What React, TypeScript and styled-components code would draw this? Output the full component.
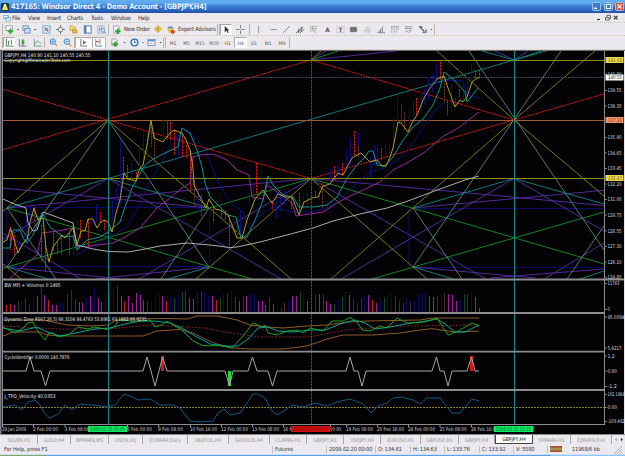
import React from "react";
import styled, { createGlobalStyle, css } from "styled-components";

const GlobalStyle = createGlobalStyle`
  * { box-sizing: border-box; }
  body { margin: 0; background: #ebe9ed; overflow: hidden; }
`;

const Window = styled.div`
  width: 625px;
  height: 456px;
  display: flex;
  flex-direction: column;
  background: #ebe9ed;
  font-family: "DejaVu Sans Condensed", "DejaVu Sans", sans-serif;
  font-size: 5.6px;
  color: #333;
  white-space: nowrap;
  overflow: hidden;
`;

const TitleBar = styled.header`
  height: 13px;
  flex: none;
  display: flex;
  align-items: center;
  padding: 0 1px 0 1px;
  background: linear-gradient(#62aef2 0, #5fa9ee 3px, #3a80d4 6px, #2c66bd 10px, #244fa0 13px);
`;

const Title = styled.h1`
  margin: 0 auto 0 2px;
  font: bold 7.4px "DejaVu Sans Condensed", "DejaVu Sans", sans-serif;
  letter-spacing: -0.27px;
  color: #e8f2ff;
`;

const CaptionButton = styled.span<{ $close?: boolean }>`
  width: 9px;
  height: 9px;
  margin-left: 2.5px;
  display: flex;
  border: 1px solid #9cc4ee;
  border-radius: 1.5px;
  background: ${(p) => (p.$close ? "#d9553a" : "#3f7ccc")};
`;

const MenuBar = styled.nav`
  height: 10px;
  flex: none;
  display: flex;
  align-items: center;
  padding: 0 5px 0 2px;
  border-bottom: 1px dotted #c9c5bb;
`;

const MenuItem = styled.span<{ $w: number }>`
  width: ${(p) => p.$w}px;
  font-size: 5.9px;
  letter-spacing: -0.2px;
`;

const MdiControls = styled.span`
  display: flex;
  gap: 2px;
  margin-left: auto;
`;

const ToolBar = styled.div<{ $h: number }>`
  height: ${(p) => p.$h}px;
  flex: none;
  display: flex;
  align-items: center;
  padding-left: 2px;
  border-bottom: 1px dotted #c9c5bb;
`;

const Slot = styled.span<{ $w: number; $on?: boolean }>`
  width: ${(p) => p.$w}px;
  height: 11px;
  flex: none;
  display: flex;
  align-items: center;
  justify-content: center;
  font-size: 4.9px;
  color: #555;
  ${(p) =>
    p.$on &&
    css`
      background: #f9f8fa;
      border: 1px solid;
      border-color: #aaa8a8 #fff #fff #aaa8a8;
    `}
`;

const ButtonText = styled.span<{ $w: number }>`
  width: ${(p) => p.$w}px;
  flex: none;
  font-size: 5.8px;
  letter-spacing: -0.2px;
`;

const Divider = styled.i<{ $grip?: boolean }>`
  width: ${(p) => (p.$grip ? 3 : 1)}px;
  height: 11px;
  flex: none;
  border-left: 1px solid #b9b5a9;
  ${(p) => p.$grip && "border-right: 1px solid #b9b5a9;"}
`;

const Workspace = styled.main`
  height: 384px;
  flex: none;
  padding: 0 1px 0 0;
  border-top: 1px solid #6f6d74;
  svg { display: block; }
`;

const Tabs = styled.div`
  height: 11px;
  flex: none;
  display: flex;
  padding-left: 1px;
  border-top: 1px solid #8b898c;
`;

const Tab = styled.span<{ $w: number; $active?: boolean }>`
  width: ${(p) => p.$w}px;
  height: 9px;
  flex: none;
  display: flex;
  align-items: center;
  justify-content: center;
  font-size: 5.2px;
  letter-spacing: -0.1px;
  color: #99979b;
  border-right: 1px solid #aaa7aa;
  ${(p) =>
    p.$active &&
    css`
      background: #fff;
      color: #222;
      border: 1px solid #444;
      border-top: 0;
    `}
`;

const StatusBar = styled.footer`
  height: 9px;
  flex: none;
  display: flex;
  align-items: center;
  padding-left: 1px;
`;

const StatusCell = styled.span<{ $w: number; $line?: boolean }>`
  width: ${(p) => p.$w}px;
  height: 7px;
  line-height: 7px;
  flex: none;
  font-size: 5.6px;
  letter-spacing: -0.1px;
  padding-left: 2px;
  margin-left: 0;
  border-left: 1px solid ${(p) => (p.$line ? "#c4c1c1" : "transparent")};
`;

const TaskbarEdge = styled.div`
  height: 3px;
  flex: none;
  border-top: 1px solid #cfe0f3;
  background: linear-gradient(90deg, #7ba56c 0, #7ba56c 45px, #5b9ff0 46px, #5b9ff0 550px, #8fc4f6 551px);
`;

/* ---------- toolbar icons, drawn on a 10x10 grid ---------- */

const glyphs: Record<string, React.ReactNode> = {
  newChart: (<><rect x="1" y="1" width="7" height="5" fill="#fff" stroke="#779" strokeWidth=".7" /><path d="M6 4v6M3 7h6" stroke="#2fae35" strokeWidth="2.2" /></>),
  profiles: (<><rect x="1" y="1" width="6" height="5" fill="#dceaf7" stroke="#6889b4" /><rect x="3" y="4" width="6" height="5" fill="#cde2f5" stroke="#6889b4" /></>),
  market: (<><rect x="1" y="1" width="8" height="8" fill="#e5f0fa" stroke="#6c9bd0" /><path d="M3 3l2 2M7 7L5 5" stroke="#d33" strokeWidth="1.4" /><path d="M7 3L3 7" stroke="#3a3" /></>),
  target: (<><circle cx="5" cy="5" r="2.6" fill="none" stroke="#888" strokeWidth="1.1" /><path d="M5 0v3M5 7v3M0 5h3M7 5h3" stroke="#777" strokeWidth="1.1" /></>),
  folder: (<><path d="M1 1h3l1 1h2v4H1z" fill="#f4d565" stroke="#b8952e" strokeWidth=".6" /><path d="M4 5h3l2 1v3H4z" fill="#f1bd38" stroke="#a47b18" strokeWidth=".6" /></>),
  terminal: (<><rect x="1.5" y="1" width="7.5" height="8" fill="#fff" stroke="#4b72a8" strokeWidth="1.1" /><path d="M3 1v8" stroke="#4b72a8" strokeWidth="1.5" /></>),
  tester: (<><rect x="1" y="1" width="7" height="8" fill="#e7eef6" stroke="#8ba0bb" strokeWidth=".8" /><path d="M3 7V3M5 6V2" stroke="#789" /><circle cx="6.5" cy="6" r="2" fill="#d5e8fa" stroke="#58a" strokeWidth=".8" /><path d="M8 7.5l1.6 2" stroke="#58a" /></>),
  order: (<><path d="M2 1h5l1 2v6H2z" fill="#fff" stroke="#777" strokeWidth=".7" /><path d="M6.5 4v6M3.5 7h6" stroke="#2fa83a" strokeWidth="2.2" /></>),
  editor: (<><path d="M5 .5L9.5 5 5 9.5.5 5z" fill="#f4ce42" stroke="#ba9426" strokeWidth=".8" /><path d="M5 3v4" stroke="#775d13" strokeWidth="1.1" /></>),
  expert: (<><path d="M1 4q4-5 8 0z" fill="#4f8bd0" /><circle cx="5" cy="6" r="2.8" fill="#edbd3a" /><circle cx="7.5" cy="7.5" r="2.2" fill="#d83a24" /></>),
  cursor: <path d="M3 1v7l2-1.6L6.2 9l1.2-.6-1.2-2.5h2z" fill="#333" />,
  cross: <path d="M5 0v4M5 6v4M0 5h4M6 5h4" stroke="#777" strokeWidth="1" />,
  vline: <path d="M5 1v8" stroke="#a29f95" strokeWidth="1.2" />,
  hline: <path d="M1.5 5h7" stroke="#99978e" strokeWidth="1.2" />,
  trend: <path d="M1.5 8.5l7-7" stroke="#777" strokeWidth="1" />,
  channel: <path d="M0 9l5-5M2 9l6-7M4 9l5-4M3 4v4M6 2v5" stroke="#666" strokeWidth="1" fill="none" />,
  fibo: <path d="M1 1.5h8M1 4h8M1 6.5h5M7 4v5M4 2v4" stroke="#918e88" strokeWidth=".9" strokeDasharray="1.3 .5" />,
  letterA: <text x="5" y="7.6" fontSize="7" fontWeight="bold" textAnchor="middle" fill="#555">A</text>,
  letterT: (<><rect x="1" y="1.5" width="8" height="7" fill="none" stroke="#999" strokeWidth=".8" strokeDasharray="1 1" /><text x="5" y="7.5" fontSize="6.5" fontWeight="bold" textAnchor="middle" fill="#555">T</text></>),
  box: <rect x="1.5" y="2.5" width="7" height="5" rx=".7" fill="#73736e" stroke="#555" strokeWidth=".6" />,
  pitch: <path d="M1 7l5-5M3 8l5-5M5 9l4-4" stroke="#888" strokeWidth=".9" strokeDasharray="1.5 .4" />,
  angle: <path d="M1 8.5h8M1 8.5L7.5 1.5M4 8.5L4 5M6 8V4" stroke="#777" strokeWidth=".9" fill="none" />,
  cycles: <path d="M2 1v8M4.5 1v8M7 1v8M9 1v5M1 2h8" stroke="#888" strokeWidth=".8" strokeDasharray="1.4 .5" />,
  levels: <path d="M1 2h8M1 4h8M2 8q1-3 2 0M6 9V6h3" stroke="#888" strokeWidth=".9" fill="none" />,
  arrows: <path d="M1 2h3v3M2 2l5 5M5 8h4V5" stroke="#555" strokeWidth="1.2" fill="none" />,
  bars: <path d="M1.5 1v8h8M4 3v5M4 4H3M7 2v5M7 6h1" stroke="#4b7a57" strokeWidth="1" fill="none" />,
  candles: (<><path d="M1.5 1v8h8M5.5 1v8" stroke="#667" strokeWidth=".9" fill="none" /><rect x="4" y="2.5" width="3" height="4.5" fill="#39a649" /></>),
  line: <path d="M1.5 1v8h8M2 7l3-4 2 2 2 1" stroke="#57916a" strokeWidth=".9" fill="none" />,
  zoomIn: (<><circle cx="4.2" cy="4" r="3" fill="#cfe5fa" stroke="#3d86d2" strokeWidth="1.1" /><path d="M6.5 6.5L9 9" stroke="#d2a03a" strokeWidth="1.6" /><path d="M2.7 4h3M4.2 2.5v3" stroke="#3478bd" strokeWidth=".8" /></>),
  zoomOut: (<><circle cx="4.2" cy="4" r="3" fill="#cfe5fa" stroke="#3d86d2" strokeWidth="1.1" /><path d="M6.5 6.5L9 9" stroke="#d2a03a" strokeWidth="1.6" /><path d="M2.7 4h3" stroke="#3478bd" strokeWidth=".8" /></>),
  scroll: (<><path d="M2 1v8h7" stroke="#667" strokeWidth=".9" fill="none" /><path d="M4.5 2.5v5L8 5z" fill="#39924a" /></>),
  shift: (<><path d="M2 1v8h7M6.5 1v6" stroke="#667" strokeWidth=".9" fill="none" /><path d="M2.5 4h3" stroke="#b44b30" strokeWidth="1.2" /></>),
  indicators: (<><path d="M2 1h4l2 2v5H2z" fill="#eef4f0" stroke="#5b7a62" strokeWidth=".7" /><path d="M6 4v6M3 7h6" stroke="#2fa83a" strokeWidth="2.1" /></>),
  clock: (<><circle cx="5" cy="5" r="3.8" fill="#e3f0fd" stroke="#2c6fc0" strokeWidth="1.5" /><path d="M5 2.8V5h2" stroke="#235" strokeWidth=".8" fill="none" /></>),
  template: (<><rect x="1" y="1.5" width="8" height="7" fill="#e9f2fb" stroke="#6487b4" strokeWidth=".9" /><path d="M1 3h8" stroke="#6494cc" strokeWidth="1.5" /><path d="M3 6h4" stroke="#cb9646" strokeWidth="1" strokeDasharray="1 .5" /></>),
  drop: <path d="M3 4h4L5 6.4z" fill="#333" />,
};

const Icon = ({ name, size = 9 }: { name: string; size?: number }) => (
  <svg width={size} height={size} viewBox="0 0 10 10">{glyphs[name]}</svg>
);

type Item = [string, number, boolean?];

const standardLeft: Item[] = [["newChart", 12], ["drop", 6], ["profiles", 11], ["drop", 6], ["market", 16], ["target", 12], ["folder", 15], ["terminal", 13], ["tester", 14]];
const drawing: Item[] = [["cursor", 12, true], ["cross", 17]];
const drawingTools: Item[] = [["vline", 17], ["hline", 12], ["trend", 15], ["channel", 12], ["fibo", 15], ["letterA", 12], ["letterT", 14], ["box", 13], ["pitch", 14], ["angle", 14], ["cycles", 13], ["levels", 14], ["arrows", 14], ["drop", 5]];
const periods: [string, number][] = [["M1", 14], ["M5", 13], ["M15", 14], ["M30", 14], ["H1", 13], ["H4", 13], ["D1", 14], ["W1", 14], ["MN", 14]];

const Slots = ({ items }: { items: Item[] }) => (
  <>{items.map(([n, w, on], i) => <Slot key={i} $w={w} $on={on}><Icon name={n} /></Slot>)}</>
);

/* ---------- chart data, in window coordinates ---------- */

const YEL = "#85850f", RED = "#d91818", CYAN = "#0d8686", TEAL = "#4d8f79", GRN = "#159326", PUR = "#5b2fa6", NAVY = "#0b0b78";

const rays: [string, number[][]][] = [
  [NAVY, [[7, 207.5, 209, 207.5], [2, 266.5, 209, 266.5], [413, 208.5, 604, 208.5], [413, 267.5, 604, 267.5], [209.5, 207, 209.5, 267], [409, 208, 409, 267], [7, 208, 7, 267]]],
  [PUR, [[2, 188, 209, 208], [7, 208, 311, 178.5], [311, 178.5, 604, 205.5], [413, 208, 604, 190.3], [108, 178.5, 2, 240], [108, 178.5, 281, 279], [2, 232.7, 81, 279], [311, 178.5, 139, 279], [311, 178.5, 486, 279], [514, 178.5, 341, 279], [514, 178.5, 604, 231], [604, 243, 544, 279], [7, 267, 120, 279], [209, 267, 95, 279], [413, 267, 535, 278], [604, 269, 490, 278], [311, 60, 326, 51], [311, 60, 395, 51], [514, 60, 495, 51], [514, 60, 528, 51]]],
  [GRN, [[7, 208, 252, 279], [2, 268.5, 311, 178.5], [311, 178.5, 604, 264], [372, 279, 604, 212], [311, 60, 338, 51]]],
  [CYAN, [[7, 208, 108, 178.5], [108, 178.5, 209, 208], [108, 178.5, 514, 60], [413, 208, 514, 178.5], [514, 178.5, 604, 204], [7, 267, 48, 279], [209, 267, 168, 279], [413, 267, 453, 279], [604, 271, 580, 279], [514, 60, 482, 51], [514, 60, 541, 51], [514, 60, 546, 51]]],
  [TEAL, [[108, 120, 7, 267], [108, 120, 209, 267], [7, 208, 56, 279], [209, 208, 161, 279], [469, 51, 604, 250], [561, 51, 413, 267], [413, 208, 462, 279], [604, 226, 567, 279]]],
  [YEL, [[108, 120, 2, 212], [108, 120, 291, 279], [311, 178.5, 196, 279], [311, 178.5, 427, 279], [514, 120, 331, 279], [514, 120, 437, 51], [595, 51, 514, 120], [514, 120, 604, 196], [2, 263, 21, 279], [311, 60, 321, 51]]],
];
const redRays = [[2, 150, 311, 60], [2, 89, 108, 120], [108, 120, 311, 178.5], [311, 60, 514, 120], [311, 178.5, 604, 94]];

const priceLines: [string, string][] = [
  ["#10107c", "77,255 85,250 108,238 125,228 140,205 150,180 160,165 167,152 182,130 192,135 205,150 217,180 230,203 243,212 250,230 260,215 272,207 290,212 311,212 330,207 345,195 360,180 370,172 385,168 400,158 415,140 425,125 435,110 444,102"],
  ["#10107c", "443,80 463,81 467,95 479,98"],
  ["#9c2a9f", "10,278 25,265 37,255 42,233 58,231 73,228 77,247 90,246 113,243 123,238 140,228 157,208 170,198 182,188 190,183 192,165 193,157 200,155 213,154 227,160 237,170 249,175 252,197 263,199 267,185 283,196 292,203 296,216 323,212 337,203 350,196 363,190 380,182 393,170 405,164 425,152 442,137 458,128 479,112"],
  ["#b4b4b4", "3,199 12,203 26,208 28,223 33,231 37,230 43,212 73,223 77,245 93,249 108,251.5 128,252 145,249 160,246 187,243 210,245 230,247.5 237,247 260,242 283,236 313,228 333,221 360,214 387,208 405,202 440,189 465,180 479,176"],
  ["#0e9a9a", "3,248 10,248 13,230 20,230 23,238 27,243 33,235 42,213 50,227 63,237 73,236 77,250 87,240 100,237 108,232 120,222 125,207 132,188 143,168 147,163 157,157 167,152 178,147 182,128 190,133 197,150 202,167 205,183 210,197 220,207 228,215 236,217 241,238 247,237 255,220 263,200 268,176 273,185 283,195 293,197 299,207 313,207 327,205 337,197 347,178 357,165 364,158 369,151 373,151 377,165 385,166 393,157 403,140 413,127 423,119 433,105 440,88 444,72 452,78 465,92 467,102 478,88"],
  ["#b5a41c", "3,242 7,240 10.5,228 15,243 18,253 23,243 27,240 30,222 34,208 38,220 43,218 46,248 49,262 53,247 62,235 65,238 73,228 77,245 81,231 85,231 88,219 93,219 97,228 101,222 104,220 108,222 112,232 116,213 120,200 124,173 128,179 136,181 139,170 143,165 147,145 151,120 154,138 163,142 170,133 174,130 182,133 186,140 190,150 193,168 194,185 200,197 206,208 209,199 215,209 220,210 228,215 237,238 242,238 247,220 255,199 263,190 272,203 278,194 285,197 292,197 299,215 304,202 312,198 318,197 323,186 330,184 338,173 343,175 347,167 352,158 361,153 370,162 377,160 382,166 386,166 390,157 393,148 398,122 401,123 408,132 412,123 417,115 423,100 430,88 437,79 444,76 448,88 455,107 460,100 463,102 467,97 472,82 477,78 479,78"],
];

const bars: [string, number[][]][] = [
  ["#0c0c7e", [[18, 242, 252], [26, 215, 245], [30, 204, 225], [73, 232, 255], [77, 220, 250], [92, 215, 225], [96.7, 204, 222], [112, 200, 220], [116, 188, 205], [120, 140, 205], [131, 160, 180], [139, 145, 170], [143.5, 134, 165], [147, 130, 160], [163, 120, 140], [178, 135, 157], [198, 190, 212], [233, 218, 235], [237, 215, 238], [240.5, 211, 238], [249, 193, 205], [253, 185, 210], [261, 170, 195], [265, 182, 200], [276, 190, 218], [280, 195, 210], [284, 190, 205], [303, 195, 210], [307, 192, 208], [319, 185, 200], [330, 168, 185], [338, 165, 178], [346, 150, 172], [350, 138, 165], [358, 132, 152], [370, 157, 178], [374, 145, 165], [377.5, 144, 165], [385.5, 145, 165], [389.5, 144, 160], [393.5, 118, 150], [397, 96, 122], [409, 110, 132], [413, 100, 118], [421, 92, 112], [424, 88, 105], [428, 77, 100], [432, 74, 92], [436.7, 65, 85], [451, 84, 112], [463, 85, 100], [467, 78, 95], [471.5, 63, 85]]],
  ["#d01616", [[10.5, 227, 250], [14.5, 235, 255], [41, 225, 262], [45.5, 245, 272], [53, 233, 252], [57.5, 242, 255], [61, 235, 255], [69, 232, 255], [80.5, 220, 238], [88.5, 219, 248], [100.5, 212, 222], [104.5, 220, 230], [123.5, 157, 180], [127.5, 165, 180], [136, 172, 182], [167, 120, 140], [170.5, 122, 140], [174.5, 130, 155], [182.5, 133, 158], [186.5, 145, 158], [190.5, 150, 190], [213.5, 206, 222], [221.7, 210, 219], [225.5, 211, 220], [229.5, 215, 246], [256.5, 163, 193], [272.5, 203, 210], [291.5, 198, 209], [299.5, 193, 216], [315.5, 191, 197], [334.5, 166, 180], [342.5, 163, 176], [354.5, 131, 157], [381.5, 148, 160], [416.5, 98, 115], [440.5, 62, 80], [447.5, 101, 115], [459.5, 89, 97], [475.5, 70, 78], [479.5, 70, 78]]],
  ["#63301f", [[34, 207, 227], [151, 120, 147], [154.5, 135, 162], [194, 177, 208], [201.5, 195, 217], [322.5, 182, 208], [358.5, 146, 157], [401, 104, 122], [404.5, 112, 130], [444.5, 80, 103], [455.5, 98, 107]]],
];

const volume =
  "r7 r8 m7 g11 n12 g14 b8 n15 m16 g25 m17 r12 m7 m7 n9 n9 g18 g22 b13 m10 m9 n15 m16 n25 m14 r10 n18 g18 n24 g27 m16 r11 m16 m9 m19 m17 r12 b10 n10 n17 n19 m16 r11 n14 g14 n18 g20 g21 m14 m13 n19 g21 n20 n17 m16 r12 g14 n18 g19 n21 b15 m11 g16 m16 n18 n18 m11 m11 m7 g14 m8 n8 b4 b9 n11 m16 m16 g20 n14 m11 n13 g17 m18 g18 m11 m8 g8 n12 g15 n20 m17 b13 g9 g14 n17 m17 r12 m9 n11 g15 n17 n19 b16 b11 b9 n14 b10 n11 n17 n19 n20 r16 m15 g16 n19 b19 m18 m17 m11 n12 g18 g18 n19 m15 r4".split(" ");
const volumeInk: Record<string, string> = { r: "#c81b1b", m: "#9a1f9a", g: "#12451e", n: "#0a0a66", b: "#4a2630" };

const rsi: [string, string][] = [
  ["#94602a", "3,320 43,320 67,325 90,326 108,325 115,321 122,319 167,318.5 187,319 197,316 217,316 237,320 250,325 263,326.5 283,328 307,326 327,325 347,322 367,321 420,320 433,318 479,318"],
  ["#94602a", "3,336 13,332 40,332 47,335 67,336 143,336 157,331 180,329.5 193,333 207,340 217,344 233,348 250,349 283,349 307,346 327,339 343,335 373,335 400,333 420,330 432,328.7 455,332 479,331"],
  ["#0fa5a0", "3,328 20,331 37,327 47,332 60,336 75,333 95,329 110,328 125,324 140,321 155,321 170,323 182,328 195,336 210,344 225,346 238,346 248,339 258,328 268,327 278,331 292,332 310,330 325,330 340,324 355,320 365,323 375,329 390,327 405,324 420,322 437,319 445,324 455,332 465,332 479,325"],
  ["#1fa81f", "3,327 15,333 23,328 28,323 33,322 37,330 45,340 49,333 53,333 58,337 68,335 78,327 88,329 94,327 100,328 108,329.7 115,326 119,319 123,321 128,320 132,322 150,320 155,327 162,325 167,321 173,325 182,330 193,341 203,345.7 220,345.7 232,348 243,336 253,323 262,327 265,325 268,333 277,335 287,331 297,330 303,333 310,328 323,331 332,321 343,321 350,317.5 357,322 362,330 370,331 380,326 387,328 397,318 407,323 425,322 437,318 442,326 448,335 458,331 472,323 479,326"],
];

const cyclePath =
  "3,371 26,371 30,357 34,371 41,371 45.5,386 50,371 143,371 147,357 151,371 155,386 159,371 162.5,357 167,371 225,371 229.5,386 233,371 248,371 252.5,357 257,371 268,371 272.5,386 277,371 346,371 350,357 354,371 358,371 362,386 366,371 432,371 436.5,357 440,371 444,371 448,386 452,371 467,371 471.5,357 475,371 479,371";
const tpo =
  "3,407 15,405 22,410 28,402 35,400 40,405 45,414 50,418 58,414 65,405 72,410 80,404 93,405 107,407 115,405 120,399 124,394 128,395 138,400 150,399 160,405 173,405 180,408 190,421 200,422 213,421 218,413 224,409 230,415 240,413 247,403 253,394 258,394 265,398 272,411 277,415 285,410 292,405 303,407 315,403 327,406 337,402 350,399 363,404 371,413 378,406 387,403 393,398 402,397 413,400 420,404 427,398 440,398 452,413 460,413 472,399 479,401";

const scale: [string, number][] = [["140.80", 74], ["139.55", 90.5], ["138.35", 106], ["135.90", 137.5], ["134.65", 153], ["133.45", 168.5], ["132.20", 184], ["131.00", 199.5], ["129.75", 215], ["128.55", 231], ["127.30", 246.5], ["126.10", 262], ["124.85", 277.3], ["11743", 283.5], ["0", 309.5], ["95.0094", 317], ["5.9217", 348], ["1.2", 356], ["0.00", 371], ["-1.2", 386.5], ["102.1964", 394.5], ["0.00", 407.5], ["-103.492", 421.5]];
const flags: [string, number, string, string][] = [["141.92", 60, "#e8d850", "#6b5d10"], ["140.55", 77.5, "#fff", "#222"], ["137.24", 120, "#f09066", "#8b3a1c"], ["132.67", 178, "#e8d850", "#6b5d10"]];
const dates: [string, number, number][] = [["29 Jan 2009", 2, 24], ["2 Feb 00:00", 33, 25], ["3 Feb 08:00", 64.5, 25], ["6 Feb 00:00", 127, 25], ["9 Feb 08:00", 158, 25], ["10 Feb 16:00", 190, 27], ["12 Feb 00:00", 221, 27], ["13 Feb 08:00", 252, 27], ["16 Feb 16:00", 283, 27], ["00:00", 330, 11], ["19 Feb 08:00", 346, 27], ["20 Feb 16:00", 377, 27], ["24 Feb 00:00", 408, 27], ["25 Feb 08:00", 439.5, 27], ["26 Feb 16:00", 471, 27]];
const stamps: [string, number, string, string][] = [["2009.02.05 00:00", 88, "#0fe860", "#076b2b"], ["2009.02.18 00:00", 291, "#d40f0f", "#7a0505"], ["2009.03.02 12:15", 494, "#0fe860", "#076b2b"]];
const captions: [string, number, number][] = [["GBPJPY,H4  140.90 141.10 140.55 140.55", 57, 86], ["Copyright@MetatraderTools.com", 62, 66], ["BW MFI + Volumes 0 1495", 287, 56], ["Dynamic Zone RSI(7,26,5) 66.3104 84.4763 53.8961 69.1862 66.9231", 321, 142], ["CycleIdentifier 0.0000 140.7876", 359, 65], ["J_TPO_Velocity 40.0353", 397.5, 51]];

const Plot = styled.svg`
  font-family: "DejaVu Sans Condensed", "DejaVu Sans", sans-serif;
  font-size: 5px;
`;

const Chart = () => (
  <Plot width="624" height="383" viewBox="0 51 624 383">
    <rect y="51" width="624" height="383" fill="#020204" />
    <g strokeWidth="1" fill="none">
      {rays.map(([c, ls]) => ls.map((l, i) => <line key={c + i} x1={l[0]} y1={l[1]} x2={l[2]} y2={l[3]} stroke={c} strokeWidth=".9" />))}
      {redRays.map((l, i) => <line key={i} x1={l[0]} y1={l[1]} x2={l[2]} y2={l[3]} stroke={RED} strokeDasharray="2.2 .8" />)}
      <path d="M3 60.5H604M3 178.5H604" stroke="#8c8c0c" />
      <path d="M3 77.5H604" stroke="#47536b" strokeDasharray="1.5 1" />
      <path d="M3 120.5H604" stroke="#9a5c35" />
    </g>
    {bars.map(([c, bs]) => bs.map((b, i) => (
      <line key={c + i} x1={Math.floor(b[0]) + 0.5} x2={Math.floor(b[0]) + 0.5} y1={b[1]} y2={b[2]} stroke={c} strokeDasharray={c === "#0c0c7e" ? undefined : "2.4 .7"} />
    )))}
    <line x1="2.5" x2="2.5" y1="220" y2="242" stroke="#f0552a" />
    {priceLines.map(([c, p], i) => <polyline key={i} points={p} fill="none" stroke={c} strokeWidth=".95" />)}

    {volume.map((v, i) => {
      const x = Math.round(6.2 + i * (472.6 / (volume.length - 1))) + 0.5;
      return <line key={i} x1={x} x2={x} y1={312} y2={312 - Number(v.slice(1))} stroke={volumeInk[v[0]]} />;
    })}
    <polyline points="3,326 60,329 108,329 150,325 205,328 225,332 260,337 310,337 345,330 370,328 405,326 479,325" fill="none" stroke="#7a2620" strokeDasharray="2 1.5" />
    {rsi.map(([c, p], i) => <polyline key={i} points={p} fill="none" stroke={c} strokeWidth=".95" />)}
    <g fill="#e01010">
      <rect x="161" y="356" width="3" height="15" />
      <rect x="470" y="356" width="3" height="15" />
      <rect x="228" y="371" width="3" height="15" fill="#16e02c" />
    </g>
    <polyline points={cyclePath} fill="none" stroke="#aaa5a5" />
    <path d="M3 407.5H604" stroke="#85802c" strokeDasharray="2 1" />
    <polyline points={tpo} fill="none" stroke="#12587f" />

    <path d="M108.5 51V424M514.5 51V424" stroke="#0f8b8b" />
    <path d="M311.5 51V424" stroke="#d81616" strokeDasharray="2.4 .8" />

    <path d="M2 279.5H624M2 313H605M2 351.7H605M2 390H605" stroke="#8d8b8c" strokeWidth="1.8" />
    <path d="M2 424.5H605M604.5 51V425M2.5 51V425" stroke="#8d8b8c" />
    <rect y="51" width="1.5" height="383" fill="#7c7a84" />
    {scale.map(([t, y]) => (
      <g key={t + y}>
        <path d={`M605 ${y}h2`} stroke="#999" strokeWidth=".8" />
        <text x="607.5" y={y + 1.8} fill="#dcdcdc" textLength={t.length > 6 ? 17 : t.length * 2.35} lengthAdjust="spacingAndGlyphs">{t}</text>
      </g>
    ))}
    {flags.map(([t, y, bg, ink]) => (
      <g key={t}>
        <rect x="605.5" y={y - 3} width="18" height="6" fill={bg} />
        <text x="608" y={y + 1.8} fill={ink} textLength="14" lengthAdjust="spacingAndGlyphs">{t}</text>
      </g>
    ))}
    {dates.map(([t, x, w]) => (
      <g key={t}>
        <path d={`M${x + 0.5} 425v2`} stroke="#999" />
        <text x={x} y="430.8" fill="#d4d4d4" textLength={w} lengthAdjust="spacingAndGlyphs">{t}</text>
      </g>
    ))}
    {stamps.map(([t, x, bg, ink]) => (
      <g key={t}>
        <rect x={x} y="426" width="39.5" height="6" rx=".5" fill={bg} />
        <text x={x + 2} y="430.8" fill={ink} textLength="35" lengthAdjust="spacingAndGlyphs">{t}</text>
      </g>
    ))}
    {captions.map(([t, y, w]) => (
      <text key={t} x="4.5" y={y} fill="#e6e6e6" textLength={w} lengthAdjust="spacingAndGlyphs">{t}</text>
    ))}
  </Plot>
);

const menus: [string, number][] = [["File", 16], ["View", 19], ["Insert", 20], ["Charts", 24], ["Tools", 20], ["Window", 27], ["Help", 20]];
const tabs: [string, number][] = [["SILVER,H1", 37], ["GOLD,H4", 33], ["BPMAR9,MS", 38], ["USDIX,H1", 34], ["ECMAR9,Daily", 45], ["HEATOIL,H4", 41], ["GASOLIN,H4", 41], ["CLAPR9,H1", 37], ["GBPJPY,H1", 37], ["USDJPY,H4", 37], ["EURUSD,H1", 40], ["GBPUSD,H1", 38], ["GBPJPY,H4", 36], ["GBPJPY,H4", 38], ["SPMAR9,H1", 38], ["DJMAR9,Dail", 41]];
const ACTIVE_TAB = 13;
const status: [string, number][] = [["2009.02.20 00:00", 49], ["O: 134.61", 35], ["H: 134.63", 34], ["L: 133.76", 35], ["C: 133.92", 34], ["V: 5580", 34]];

export default function App() {
  return (
    <Window>
      <GlobalStyle />
      <TitleBar>
        <svg width="8" height="8" viewBox="0 0 8 8">
          <rect width="8" height="8" rx="1" fill="#173d2d" />
          <path d="M4 .7L6 4l1 3H1l1-3z" fill="#f2df70" />
          <circle cx="4" cy="2.2" r="1.2" fill="#fff7bf" />
        </svg>
        <Title>417165: Windsor Direct 4 - Demo Account - [GBPJPY,H4]</Title>
        <CaptionButton><svg width="7" height="7" viewBox="0 0 7 7"><path d="M1 5.3h3" stroke="#fff" strokeWidth="1.4" /></svg></CaptionButton>
        <CaptionButton><svg width="7" height="7" viewBox="0 0 7 7"><rect x="1.3" y="1.3" width="4.4" height="4.2" fill="none" stroke="#fff" /></svg></CaptionButton>
        <CaptionButton $close><svg width="7" height="7" viewBox="0 0 7 7"><path d="M1.3 1.3l4.4 4.4M5.7 1.3L1.3 5.7" stroke="#fff" strokeWidth="1.2" /></svg></CaptionButton>
      </TitleBar>
      <MenuBar>
        <Slot $w={10}>
          <svg width="8" height="8" viewBox="0 0 8 8"><path d="M.5 1.5h5v3h-5zM2.5 3.5h5v3.5h-5z" fill="#e4f1fb" stroke="#6faad6" strokeWidth=".8" /></svg>
        </Slot>
        {menus.map(([t, w]) => <MenuItem key={t} $w={w}>{t}</MenuItem>)}
        <MdiControls>
          <svg width="25" height="7" viewBox="0 0 25 7">
            <path d="M2 5.5h3" stroke="#333" strokeWidth="1.2" />
            <path d="M10.5 3.5h3.5v2.5h-3.5zM12 3V1.3h3.5V4.5H14" fill="none" stroke="#555" strokeWidth=".9" />
            <path d="M19 1.8l3.4 3.6M22.4 1.8L19 5.4" stroke="#333" strokeWidth="1.1" />
          </svg>
        </MdiControls>
      </MenuBar>
      <ToolBar $h={13}>
        <Divider />
        <Slots items={standardLeft} />
        <Divider />
        <Slot $w={15}><Icon name="order" /></Slot>
        <ButtonText $w={28}>New Order</ButtonText>
        <Slot $w={11}><Icon name="editor" size={8} /></Slot>
        <Slot $w={15}><Icon name="expert" /></Slot>
        <ButtonText $w={39}>Expert Advisors</ButtonText>
        <Divider $grip />
        <Slots items={drawing} />
        <Divider />
        <Slots items={drawingTools} />
        <Divider />
      </ToolBar>
      <ToolBar $h={14}>
        <Divider />
        <Slots items={[["bars", 12, true], ["candles", 15], ["line", 14]]} />
        <Divider />
        <Slots items={[["zoomIn", 16], ["zoomOut", 13]]} />
        <Divider />
        <Slots items={[["scroll", 17, true], ["shift", 13, true]]} />
        <Divider />
        <Slots items={[["indicators", 16], ["drop", 5], ["clock", 14], ["drop", 4], ["template", 13], ["drop", 5]]} />
        <Divider $grip />
        {periods.map(([t, w]) => <Slot key={t} $w={w} $on={t === "H4"}>{t}</Slot>)}
        <Divider />
      </ToolBar>
      <Workspace><Chart /></Workspace>
      <Tabs>
        {tabs.map(([t, w], i) => <Tab key={i} $w={w} $active={i === ACTIVE_TAB}>{t}</Tab>)}
        <svg width="16" height="9" viewBox="0 0 16 9"><path d="M6 2.5v4L3.5 4.5z" fill="#999" /><path d="M11 2.5v4l2.5-2z" fill="#222" /></svg>
      </Tabs>
      <StatusBar>
        <StatusCell $w={271}>For Help, press F1</StatusCell>
        <StatusCell $w={54} $line>Futures</StatusCell>
        {status.map(([t, w]) => <StatusCell key={t} $w={w} $line>{t}</StatusCell>)}
        <StatusCell $w={22} $line>
          <svg width="12" height="6" viewBox="0 0 12 6">
            <rect width="12" height="6" fill="#bf4030" />
            <path d="M1 1v4M4 1v4M7 1v4M10 1v4" stroke="#5da843" strokeWidth="1.5" />
            <path d="M0 3h12" stroke="#efd071" strokeWidth=".6" />
          </svg>
        </StatusCell>
        <StatusCell $w={44}>11968/6 kb</StatusCell>
        <svg width="9" height="8" viewBox="0 0 9 8"><path d="M1 8l8-8M4 8l5-5M7 8l2-2" stroke="#a8a5a0" strokeWidth=".9" /></svg>
      </StatusBar>
      <TaskbarEdge />
    </Window>
  );
}
